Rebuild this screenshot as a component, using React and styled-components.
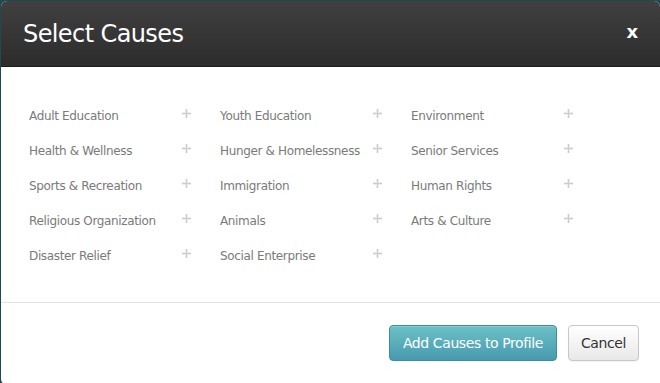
import React from "react";
import styled, { createGlobalStyle } from "styled-components";

const GlobalStyle = createGlobalStyle`
  html, body {
    margin: 0;
    padding: 0;
    background: #1f4a4e;
  }
  body {
    width: 660px;
    height: 383px;
    overflow: hidden;
    font-family: "DejaVu Sans", Tahoma, sans-serif;
  }
`;

const Modal = styled.div`
  margin: 1px 0 0 1px;
  width: 659px;
  height: 384px;
  background: #fff;
  border-radius: 6px 6px 0 6px;
  overflow: hidden;
  display: flex;
  flex-direction: column;
`;

const Header = styled.header`
  height: 65px;
  display: flex;
  align-items: center;
  justify-content: space-between;
  padding: 0 22px;
  background: linear-gradient(#404040, #2c2c2c);
  border-bottom: 1px solid #1c1c1c;
`;

const Title = styled.h1`
  margin: 0;
  color: #fff;
  font-size: 24px;
  font-weight: normal;
  letter-spacing: -0.6px;
`;

const Close = styled.span`
  color: #fff;
  font-size: 18px;
  font-weight: bold;
  margin-top: -4px;
`;

const Body = styled.div`
  height: 196px;
  display: grid;
  grid-template-columns: repeat(3, 162px);
  column-gap: 29px;
  grid-auto-rows: 35px;
  align-content: start;
  padding: 39px 0 0 28px;
  border-bottom: 1px solid #e3e3e3;
`;

const Item = styled.div`
  display: flex;
  align-items: center;
  justify-content: space-between;
  height: 20px;
  color: #7a7a7a;
  font-size: 12px;
  letter-spacing: -0.35px;
`;

const Plus = styled.svg`
  width: 9px;
  height: 9px;
  margin-top: -5px;
`;

const Footer = styled.footer`
  height: 80px;
  display: flex;
  align-items: center;
  justify-content: flex-end;
  gap: 11px;
  padding: 0 21px 0 0;
`;

const Button = styled.button`
  height: 36px;
  padding: 0 ${(p) => (p.primary ? "13px" : "12px")};
  border-radius: 4px;
  font-family: "DejaVu Sans", Tahoma, sans-serif;
  font-size: 14px;
  letter-spacing: -0.4px;
  cursor: pointer;
  color: ${(p) => (p.primary ? "#fff" : "#333")};
  background: ${(p) =>
    p.primary
      ? "linear-gradient(#6cc1c5, #479aaf)"
      : "linear-gradient(#ffffff, #e8e8e8)"};
  border: 1px solid ${(p) => (p.primary ? "#3e8c9c" : "#c8c8c8")};
  box-shadow: ${(p) =>
    p.primary
      ? "inset 0 1px 0 rgba(255,255,255,0.2)"
      : "inset 0 1px 0 #fff, 0 1px 1px rgba(0,0,0,0.05)"};
`;

const causes = [
  "Adult Education",
  "Youth Education",
  "Environment",
  "Health & Wellness",
  "Hunger & Homelessness",
  "Senior Services",
  "Sports & Recreation",
  "Immigration",
  "Human Rights",
  "Religious Organization",
  "Animals",
  "Arts & Culture",
  "Disaster Relief",
  "Social Enterprise",
];

function PlusIcon() {
  return (
    <Plus viewBox="0 0 9 9">
      <rect x="3" y="0" width="3" height="9" fill="#eeeeee" />
      <rect x="0" y="3" width="9" height="3" fill="#eeeeee" />
      <rect x="4" y="0" width="1" height="9" fill="#cccccc" />
      <rect x="0" y="4" width="9" height="1" fill="#cccccc" />
    </Plus>
  );
}

export default function App() {
  return (
    <>
      <GlobalStyle />
      <Modal>
        <Header>
          <Title>Select Causes</Title>
          <Close>x</Close>
        </Header>
        <Body>
          {causes.map((c) => (
            <Item key={c}>
              <span>{c}</span>
              <PlusIcon />
            </Item>
          ))}
        </Body>
        <Footer>
          <Button primary>Add Causes to Profile</Button>
          <Button>Cancel</Button>
        </Footer>
      </Modal>
    </>
  );
}
